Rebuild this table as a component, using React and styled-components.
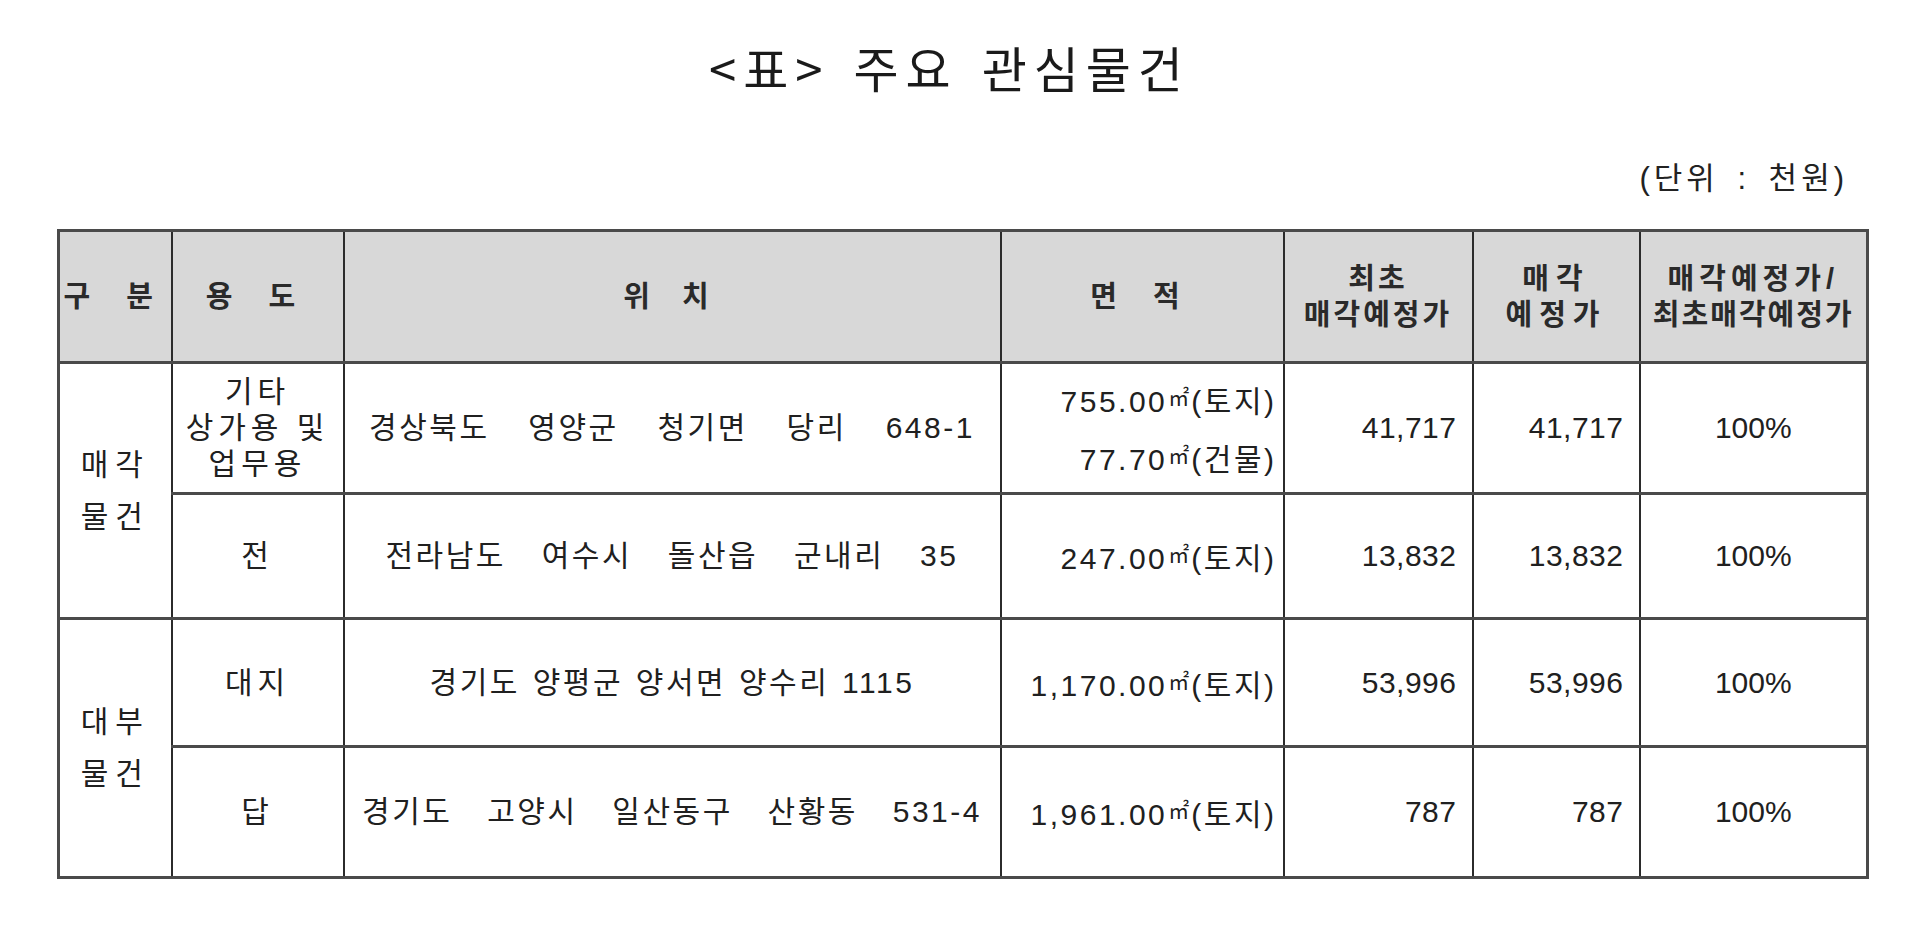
import styled, { createGlobalStyle } from "styled-components";

const GlobalStyle = createGlobalStyle`
  html, body {
    margin: 0;
    padding: 0;
    background: #ffffff;
  }
  body {
    font-family: "Liberation Sans", "Noto Sans CJK KR", sans-serif;
    color: #1e1e1e;
  }
`;

const Page = styled.div`
  width: 1920px;
  height: 945px;
  padding: 37px 54px 0 57px;
  box-sizing: border-box;
`;

const Title = styled.h1`
  margin: 0;
  padding-right: 24px;
  text-align: center;
  font-family: "Noto Sans CJK KR", sans-serif;
  font-weight: 400;
  font-size: 49px;
  line-height: 60px;
  letter-spacing: 7px;
  word-spacing: 6px;
  color: #1a1a1a;
`;

const Unit = styled.div`
  margin-top: 62px;
  padding-right: 18px;
  text-align: right;
  font-size: 31px;
  line-height: 40px;
  letter-spacing: 4px;
  word-spacing: 6px;
  color: #222;
`;

const Table = styled.table`
  margin-top: 30px;
  width: 1809px;
  border-collapse: collapse;
  table-layout: fixed;
  border: 3px solid #4a4a4a;
`;

const HeadRow = styled.tr`
  height: ${(p) => p.$h}px;
  background: #d8d8d8;
`;

const Row = styled.tr`
  height: ${(p) => p.$h}px;
`;

const Th = styled.th`
  padding: 0;
  border-left: 2px solid #2b2b2b;
  border-right: 2px solid #2b2b2b;
  border-bottom: 3px solid #4a4a4a;
  font-family: "Liberation Sans", "Noto Sans CJK KR", sans-serif;
  font-weight: 700;
  font-size: 29px;
  line-height: 36px;
  color: #2a2a2a;
  text-align: center;
  vertical-align: middle;
  overflow: hidden;
`;

const HeadLine = styled.div`
  letter-spacing: ${(p) => p.$ls || 0}px;
  white-space: nowrap;
`;

const Td = styled.td`
  padding: 0 ${(p) => (p.$align === "right" ? p.$pr || 15 : 0)}px 0 0;
  border-left: 2px solid #2b2b2b;
  border-right: 2px solid #2b2b2b;
  border-bottom: 3px solid #4a4a4a;
  font-size: 30px;
  line-height: ${(p) => p.$lh || 36}px;
  letter-spacing: ${(p) => p.$ls || 0}px;
  word-spacing: ${(p) => p.$ws || 0}px;
  color: #202020;
  text-align: ${(p) => p.$align || "center"};
  vertical-align: middle;
  white-space: pre-line;
`;

const Sqm = styled.span`
  font-family: "Noto Sans CJK KR", sans-serif;
  font-size: 21px;
  letter-spacing: 0;
  vertical-align: 7px;
  margin: 0 2px 0 1px;
`;

const cols = [113, 172, 657, 283, 189, 167, 228];

const heads = [
  [["구 분", 14]],
  [["용 도", 14]],
  [["위 치", 12]],
  [["면 적", 14]],
  [
    ["최초", 3],
    ["매각예정가", 3],
  ],
  [
    ["매각", 7],
    ["예정가", 7],
  ],
  [
    ["매각예정가/", 5],
    ["최초매각예정가", 2],
  ],
];

const groups = [
  {
    label: "매각\n물건",
    rows: [
      {
        h: 131,
        use: "기타\n상가용 및\n업무용",
        loc: "경상북도 영양군 청기면 당리 648-1",
        ws: 28,
        area: [
          ["755.00", "토지"],
          ["77.70", "건물"],
        ],
        first: "41,717",
        sale: "41,717",
      },
      {
        h: 125,
        use: "전",
        loc: "전라남도 여수시 돌산읍 군내리 35",
        ws: 25,
        area: [["247.00", "토지"]],
        first: "13,832",
        sale: "13,832",
      },
    ],
  },
  {
    label: "대부\n물건",
    rows: [
      {
        h: 128,
        use: "대지",
        loc: "경기도 양평군 양서면 양수리 1115",
        ws: 2,
        area: [["1,170.00", "토지"]],
        first: "53,996",
        sale: "53,996",
      },
      {
        h: 131,
        use: "답",
        loc: "경기도 고양시 일산동구 산황동 531-4",
        ws: 24,
        area: [["1,961.00", "토지"]],
        first: "787",
        sale: "787",
      },
    ],
  },
];

function Area({ lines }) {
  return lines.map(([n, kind], i) => (
    <div key={i}>
      {n}
      <Sqm>㎡</Sqm>({kind})
    </div>
  ));
}

export default function App() {
  return (
    <Page>
      <GlobalStyle />
      <Title>&lt;표&gt; 주요 관심물건</Title>
      <Unit>(단위 : 천원)</Unit>
      <Table>
        <colgroup>
          {cols.map((w, i) => (
            <col key={i} style={{ width: w }} />
          ))}
        </colgroup>
        <thead>
          <HeadRow $h={132}>
            {heads.map((lines, i) => (
              <Th key={i}>
                {lines.map(([t, ls]) => (
                  <HeadLine key={t} $ls={ls}>
                    {t}
                  </HeadLine>
                ))}
              </Th>
            ))}
          </HeadRow>
        </thead>
        <tbody>
          {groups.map((g) =>
            g.rows.map((r, i) => (
              <Row key={g.label + i} $h={r.h}>
                {i === 0 && (
                  <Td rowSpan={g.rows.length} $lh={52} $ls={7}>
                    {g.label}
                  </Td>
                )}
                <Td $lh={36} $ls={5}>
                  {r.use}
                </Td>
                <Td $ws={r.ws} $ls={2.5}>
                  {r.loc}
                </Td>
                <Td $align="right" $pr={6} $lh={52} $ls={2.5}>
                  <Area lines={r.area} />
                </Td>
                <Td $align="right" $ls={0.5}>
                  {r.first}
                </Td>
                <Td $align="right" $ls={0.5}>
                  {r.sale}
                </Td>
                <Td>100%</Td>
              </Row>
            ))
          )}
        </tbody>
      </Table>
    </Page>
  );
}
